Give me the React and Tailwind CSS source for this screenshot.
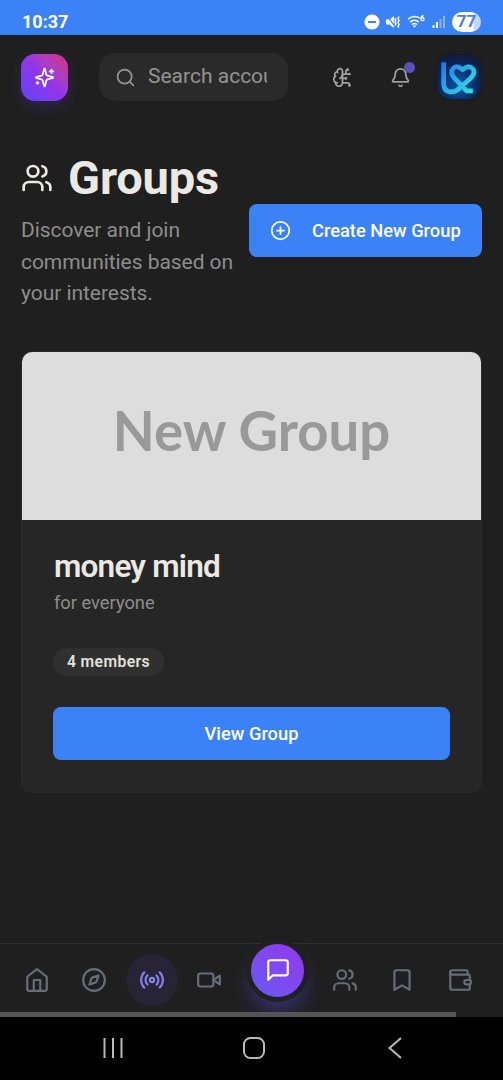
import { BrainCircuit, Bell, Search, CirclePlus } from "lucide-react";

const usersPaths = (
  <>
    <path d="M16 21v-2a4 4 0 0 0-4-4H6a4 4 0 0 0-4 4v2" />
    <circle cx="9" cy="7" r="4" />
    <path d="M22 21v-2a4 4 0 0 0-3-3.87" />
    <path d="M16 3.13a4 4 0 0 1 0 7.75" />
  </>
);

const navItems = [
  {
    name: "home",
    icon: (
      <>
        <path d="m3 9 9-7 9 7v11a2 2 0 0 1-2 2H5a2 2 0 0 1-2-2z" />
        <path d="M9 22V12h6v10" />
      </>
    ),
  },
  {
    name: "explore",
    icon: (
      <>
        <circle cx="12" cy="12" r="10" />
        <path d="m16.24 7.76-1.804 5.411a2 2 0 0 1-1.265 1.265L7.76 16.24l1.804-5.411a2 2 0 0 1 1.265-1.265z" />
      </>
    ),
  },
  {
    name: "live",
    active: true,
    icon: (
      <>
        <path d="M4.9 19.1C1 15.2 1 8.8 4.9 4.9" />
        <path d="M7.8 16.2c-2.3-2.3-2.3-6.1 0-8.5" />
        <circle cx="12" cy="12" r="2" />
        <path d="M16.2 7.8c2.3 2.3 2.3 6.1 0 8.5" />
        <path d="M19.1 4.9C23 8.8 23 15.1 19.1 19" />
      </>
    ),
  },
  {
    name: "videos",
    icon: (
      <>
        <path d="m22 8-6 4 6 4V8Z" />
        <rect width="14" height="12" x="2" y="6" rx="2" />
      </>
    ),
  },
  {
    name: "chat",
    main: true,
    icon: <path d="M21 15a2 2 0 0 1-2 2H7l-4 4V5a2 2 0 0 1 2-2h14a2 2 0 0 1 2 2z" />,
  },
  {
    name: "groups",
    icon: usersPaths,
  },
  {
    name: "saved",
    icon: <path d="m19 21-7-4-7 4V5a2 2 0 0 1 2-2h10a2 2 0 0 1 2 2v16z" />,
  },
  {
    name: "wallet",
    icon: (
      <>
        <path d="M19 7V4a1 1 0 0 0-1-1H5a2 2 0 0 0 0 4h15a1 1 0 0 1 1 1v4h-3a2 2 0 0 0 0 4h3a1 1 0 0 0 1-1v-2a1 1 0 0 0-1-1" />
        <path d="M3 5v14a2 2 0 0 0 2 2h15a1 1 0 0 0 1-1v-4" />
      </>
    ),
  },
];

function Icon({ className, children }) {
  return (
    <svg
      className={className}
      viewBox="0 0 24 24"
      fill="none"
      stroke="currentColor"
      strokeWidth="2"
      strokeLinecap="round"
      strokeLinejoin="round"
    >
      {children}
    </svg>
  );
}

function StatusBar() {
  return (
    <div className="flex h-[35px] shrink-0 items-end justify-between bg-[#3b82f6] pr-[22px] pl-[22px] text-white">
      <span className="pb-[3px] text-[18px] leading-5 font-bold">10:37</span>
      <div className="flex h-[27px] items-center">
        <svg className="mr-[5px] size-4" viewBox="0 0 16 16">
          <circle cx="8" cy="8" r="7.6" fill="white" />
          <path d="M4 8h8" stroke="#3b82f6" strokeWidth="2" />
        </svg>
        <svg className="mr-[6px] h-4 w-[16px]" viewBox="0 0 16 16" fill="none" stroke="white" strokeWidth="1.4">
          <path d="M1 5.500h3.500l4.500-3.500v12l-4.500-3.500H1z" fill="white" stroke="none" />
          <path d="M1.500.800l9.500 13" stroke="#3b82f6" strokeWidth="1.200" />
          <path d="m11 4-1 1.500 1 1.500-1 1.500 1 1.500-1 1.500M14 2.500l-1 2 1 2-1 2 1 2-1 2 1 1" />
        </svg>
        <svg className="mr-[6px] h-4 w-[19px]" viewBox="0 0 19 16" fill="none" stroke="white" strokeWidth="1.6">
          <path d="M1 5.200q6-4.600 11.500-1.200M3 8q4.500-3.500 9 0M5 10.500q2.500-2 5 0" />
          <path d="m5.700 11.400 1.800 2.400 1.800-2.400z" fill="white" stroke="none" />
          <path d="M16.500 1.500q-2.500.5-2.500 3.500" strokeWidth="1.300" />
          <circle cx="15.500" cy="5.200" r="1.500" strokeWidth="1.300" />
        </svg>
        <svg className="mr-[6px] h-4 w-[14px]" viewBox="0 0 14 16" fill="white">
          <rect x="0.500" y="11" width="2" height="3" />
          <rect x="4" y="8" width="2" height="6" />
          <rect x="7.500" y="5" width="2" height="9" opacity="0.400" />
          <rect x="11" y="2" width="2" height="12" opacity="0.400" />
        </svg>
        <span className="flex h-5 w-[29px] items-center justify-center rounded-full bg-linear-to-r from-white from-75% to-[#c3d8fc] to-75% text-[17px] font-bold text-[#4d80da]">
          77
        </span>
      </div>
    </div>
  );
}

function Avatar() {
  return (
    <div className="flex size-[44px] items-center justify-center rounded-[14px] bg-[radial-gradient(circle_at_50%_68%,#0d56a8,#0c2150_62%,#141a2a)] shadow-[0_0_4px_#10182c]">
      <svg
        className="size-[40px]"
        viewBox="0 0 39 39"
        fill="none"
        stroke="url(#brand)"
        strokeWidth="4.600"
        strokeLinejoin="round"
      >
        <defs>
          <linearGradient id="brand" x1="4" y1="4" x2="35" y2="32" gradientUnits="userSpaceOnUse">
            <stop stopColor="#1b72ee" />
            <stop offset="0.5" stopColor="#28b0ee" />
            <stop offset="1" stopColor="#2de0dd" />
          </linearGradient>
        </defs>
        <path d="M4.500 5v20q0 9 8 9q4 0 8-4l10-9q5.500-5.500 2.500-9.500q-4.500-4.500-10 1q-5.500-5.500-9.500-1q-3 4 1.500 9l12 12.500h6" />
      </svg>
    </div>
  );
}

function Header() {
  return (
    <header className="flex h-[86px] shrink-0 items-center border-b border-[#222222] pr-[22px] pb-px pl-[21px]">
      <button className="flex size-[47px] items-center justify-center rounded-[14px] bg-linear-to-tr from-[#5b45f5] via-[#9333ea] to-[#db2777] text-white shadow-[0_5px_14px_rgba(91,69,245,0.22)]">
        <Icon className="size-[21px]">
          <path d="M9.937 15.500A2 2 0 0 0 8.500 14.063l-6.135-1.582a.5.5 0 0 1 0-.962L8.500 9.936A2 2 0 0 0 9.937 8.500l1.582-6.135a.5.5 0 0 1 .963 0L14.063 8.500A2 2 0 0 0 15.500 9.937l6.135 1.581a.5.5 0 0 1 0 .964L15.500 14.063a2 2 0 0 0-1.437 1.437l-1.582 6.135a.5.5 0 0 1-.963 0z" />
          <path d="M20 3v4M22 5h-4M4 17v2M5 18H3" />
        </Icon>
      </button>
      <div className="ml-[31px] flex h-12 w-[189px] items-center rounded-[16px] bg-[#2a2a2a] pr-[21px] pl-4 text-[#949494]">
        <Search className="size-[21px] shrink-0" />
        <span className="ml-[12px] overflow-hidden text-[21px] whitespace-nowrap">Search accounts</span>
      </div>
      <BrainCircuit className="ml-[44px] size-[21px] text-[#a0a0a0]" />
      <div className="relative ml-[37px] text-[#a0a0a0]">
        <Bell className="size-[21px]" />
        <span className="absolute -top-[5px] -right-[4px] size-[11px] rounded-full bg-[#5a50b8]" />
      </div>
      <div className="ml-auto">
        <Avatar />
      </div>
    </header>
  );
}

function GroupCard() {
  return (
    <div className="overflow-hidden rounded-[11px] border border-[#2a2a2a] bg-[#262626]">
      <div className="flex h-[168px] items-center justify-center bg-[#dddddd] pb-[9px] font-[Lato] text-[54.500px] font-bold text-[#999999]">
        New Group
      </div>
      <div className="px-[31px] pt-[31px] pb-[32px]">
        <h2 className="pl-px text-[31.500px] leading-8 font-semibold tracking-[-0.8px] text-[#ebe9e4]">money mind</h2>
        <p className="mt-[7px] pl-px text-[18.300px] leading-[26px] text-[#8d8d8d]">for everyone</p>
        <span className="mt-[32px] flex h-7 w-[111px] items-center justify-center rounded-full bg-[#303030] text-[15.700px] font-semibold tracking-[0.4px] text-[#e3e1dd]">
          4 members
        </span>
        <button className="mt-[31px] flex h-[53px] w-full items-center justify-center rounded-[8px] bg-[#3b82f6] pt-px text-[18.300px] font-medium text-white">
          View Group
        </button>
      </div>
    </div>
  );
}

function BottomNav() {
  return (
    <nav className="flex h-[74px] shrink-0 flex-col border-t border-[#303030]">
      <div className="flex h-[68px] items-center pt-[4px] pl-[8px]">
        {navItems.map((item) => {
          if (item.main) {
            return (
              <div key={item.name} className="mr-[12px] ml-[13px] flex w-[53px] shrink-0 justify-center">
                <button className="relative -top-[10px] flex size-[53px] items-center justify-center rounded-full bg-linear-to-tr from-[#6559f6] to-[#9333ea] text-white shadow-[0_0_0_5px_#202020,0_13px_20px_1px_rgba(99,76,241,0.4)]">
                  <Icon className="size-[26px]">{item.icon}</Icon>
                </button>
              </div>
            );
          }
          return (
            <button
              key={item.name}
              className={
                item.active
                  ? "mx-[2.75px] flex size-[52px] shrink-0 items-center justify-center rounded-full bg-[#272435] text-[#8580ea]"
                  : "mx-[2.75px] flex size-[52px] shrink-0 items-center justify-center text-[#666d7b]"
              }
            >
              <Icon className="size-[26px]">{item.icon}</Icon>
            </button>
          );
        })}
      </div>
      <div className="relative h-[5px] w-[456px] bg-[#555555]" />
    </nav>
  );
}

function SystemNav() {
  return (
    <div className="relative flex h-[63px] shrink-0 items-center justify-between bg-black pr-[101px] pb-[2px] pl-[103px] text-[#bababa]">
      <svg className="h-[22px] w-5" viewBox="0 0 20 22" stroke="currentColor" strokeWidth="2">
        <path d="M1.500 1v20M10 1v20M18.500 1v20" />
      </svg>
      <svg className="mr-[3px] h-[22px] w-[22px]" viewBox="0 0 22 22" fill="none" stroke="currentColor" strokeWidth="2">
        <rect x="1" y="1" width="20" height="20" rx="6.500" />
      </svg>
      <svg className="h-[22px] w-[14px]" viewBox="0 0 14 22" fill="none" stroke="currentColor" strokeWidth="2">
        <path d="M13 1 1.500 11 13 21" />
      </svg>
    </div>
  );
}

export default function App() {
  return (
    <div className="flex h-[1080px] w-[503px] flex-col overflow-hidden bg-[#1f1f1f] font-[Roboto,sans-serif]">
      <StatusBar />
      <Header />
      <main className="flex-1 px-[21px] pt-[30px]">
        <div className="mb-[41px] flex items-center justify-between">
          <div className="w-[220px] shrink-0">
            <h1 className="flex items-center text-[47px] leading-[53px] font-bold tracking-[-0.15px] text-[#ebe9e4]">
              <Icon className="mr-[15px] size-[32px]">{usersPaths}</Icon>
              Groups
            </h1>
            <p className="mt-[11px] text-[21px] leading-[31.500px] tracking-[-0.05px] text-[#8d8d8d]">
              Discover and join
              <br />
              communities based on
              <br />
              your interests.
            </p>
          </div>
          <button className="flex h-[53px] w-[233px] shrink-0 items-center rounded-[8px] bg-[#3b82f6] pl-[21px] text-[18.300px] font-medium whitespace-nowrap text-white">
            <CirclePlus className="mr-[21px] size-[21px]" />
            Create New Group
          </button>
        </div>
        <GroupCard />
      </main>
      <BottomNav />
      <SystemNav />
    </div>
  );
}
